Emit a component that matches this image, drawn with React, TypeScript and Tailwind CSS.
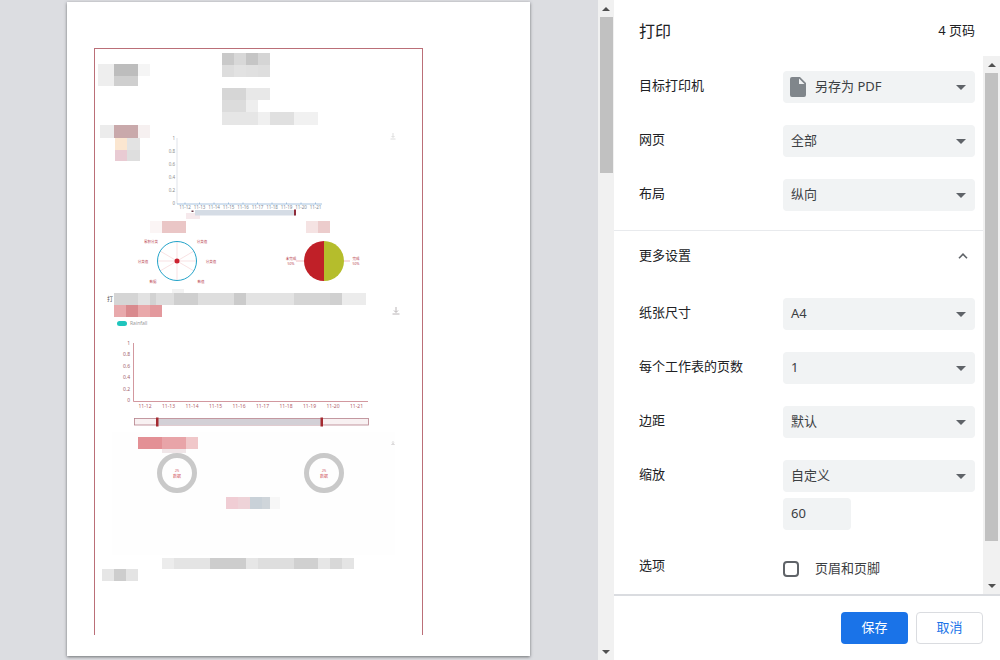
/**
 * Chrome print preview dialog
 * Left: page preview (redacted report). Right: print settings panel.
 */
type Cell = [string, number];

// pixelated redaction strip, colours and widths come from the data
function Strip({ cells, h = 12, className = "" }: { cells: Cell[]; h?: number; className?: string }) {
  return (
    <div className={"flex shrink-0 " + className} style={{ height: h }}>
      {cells.map(([color, w], i) => (
        <div key={i} style={{ width: w, backgroundColor: color }} />
      ))}
    </div>
  );
}

function Caret() {
  return (
    <svg width="10" height="5" viewBox="0 0 10 5" className="ml-auto mr-[9px] shrink-0">
      <path d="M0 0h10L5 5z" fill="#5f6368" />
    </svg>
  );
}

function Select({ label, value, icon }: { label: string; value: string; icon?: boolean }) {
  return (
    <div className="flex items-center">
      <div className="w-[144px] pb-0.5 text-[13px] text-[#202124]">{label}</div>
      <div className="flex h-8 w-[192px] items-center rounded bg-[#f1f3f4] pl-2 text-[13px] text-[#3c4043]">
        {icon && (
          <svg width="18" height="20" viewBox="4 2 16 20" className="mr-[6px] -ml-[2px]">
            <path d="M14 2H6a2 2 0 0 0-2 2v16a2 2 0 0 0 2 2h12a2 2 0 0 0 2-2V8l-6-6zm-1 7V3.5L18.5 9H13z" fill="#80868b" />
          </svg>
        )}
        {icon ? <span className="ml-[2px]">{value}</span> : value}
        <Caret />
      </div>
    </div>
  );
}

function ScrollArrow({ up }: { up?: boolean }) {
  return (
    <div className="flex h-[17px] shrink-0 items-center justify-center">
      <svg width="8" height="4" viewBox="0 0 8 4">
        <path d={up ? "M0 4h8L4 0z" : "M0 0h8L4 4z"} fill="#505050" />
      </svg>
    </div>
  );
}

function Scrollbar({ thumb, className }: { thumb: string; className: string }) {
  return (
    <div className={"flex shrink-0 flex-col bg-[#f1f1f1] " + className}>
      <ScrollArrow up />
      <div className={"mx-auto w-[13px] bg-[#c1c1c1] " + thumb} />
      <div className="flex-1" />
      <ScrollArrow />
    </div>
  );
}

function DownloadIcon({ className = "" }: { className?: string }) {
  return (
    <svg width="8" height="8" viewBox="0 0 8 8" className={className}>
      <path d="M4 0v5M2 3.5 4 5.5l2-2M0.5 7h7" fill="none" stroke="#b9b4b6" strokeWidth="1" />
    </svg>
  );
}

const days = ["11-12", "11-13", "11-14", "11-15", "11-16", "11-17", "11-18", "11-19", "11-20", "11-21"];

function SmallChart() {
  return (
    <svg width="257" height="90" viewBox="165 130 257 90" className="mt-[5px] block">
      <path d="M177 138v66" stroke="#dfe3ea" strokeWidth="1" />
      {["1", "0.8", "0.6", "0.4", "0.2", "0"].map((t, i) => (
        <text key={t} x="175" y={139.5 + i * 13.1} fontSize="4.5" textAnchor="end" fill="#8a8a8a">
          {t}
        </text>
      ))}
      <path d="M177 204h145" stroke="#8fb4d8" strokeWidth="0.8" />
      {days.map((d, i) => (
        <g key={d}>
          <path d={`M${185 + i * 14.5} 202.5v1.5`} stroke="#8fb4d8" strokeWidth="0.8" />
          <text x={185 + i * 14.5} y="209" fontSize="4.5" textAnchor="middle" fill="#7d8794">
            {d}
          </text>
        </g>
      ))}
      <rect x="186" y="213" width="14" height="6" fill="#f6e9ec" />
      <rect x="195" y="210" width="100" height="5.5" fill="#d5dce5" />
      <rect x="191.5" y="210.5" width="2" height="1.5" fill="#6b3a48" />
      <rect x="294" y="209.5" width="2" height="6" fill="#8e2c3a" />
      <path d="M393 133v4M391.5 136l1.5 1.5 1.5-1.5M390.5 139h5" fill="none" stroke="#cfcfcf" strokeWidth="0.7" />
    </svg>
  );
}

function RadarChart() {
  const labels: [string, number, number][] = [
    ["累积分类", 151, 242.5],
    ["分类值", 202, 242.5],
    ["分类值", 143, 262.5],
    ["分类值", 211, 262.5],
    ["数据", 153, 282.5],
    ["数值", 201, 282.5],
  ];
  return (
    <svg width="105" height="56" viewBox="125 233 105 56" className="block">
      <path d="M177 241v40M160 251l34 20M194 251l-34 20M157 261h40" stroke="#f3cfd0" strokeWidth="0.6" />
      <circle cx="177" cy="261" r="19.5" fill="none" stroke="#23a3c9" strokeWidth="1" />
      <circle cx="177" cy="261" r="2.5" fill="#cc2230" />
      {labels.map(([t, x, y]) => (
        <text key={x + t} x={x} y={y} fontSize="3.5" textAnchor="middle" fill="#b8404c">
          {t}
        </text>
      ))}
    </svg>
  );
}

function PieChart() {
  return (
    <svg width="105" height="56" viewBox="270 233 105 56" className="block">
      <path d="M324 241a20 20 0 0 1 0 40z" fill="#b5bd2c" />
      <path d="M324 241a20 20 0 0 0 0 40z" fill="#c02028" />
      <path d="M296 261h8M344 261h6" stroke="#e88f96" strokeWidth="0.6" />
      <text x="291" y="260" fontSize="3.5" textAnchor="middle" fill="#b8404c">未完成</text>
      <text x="291" y="264.5" fontSize="3.5" textAnchor="middle" fill="#b8404c">50%</text>
      <text x="356" y="260" fontSize="3.5" textAnchor="middle" fill="#b8404c">完成</text>
      <text x="356" y="264.5" fontSize="3.5" textAnchor="middle" fill="#b8404c">50%</text>
    </svg>
  );
}

function RainfallChart() {
  return (
    <svg width="327" height="102" viewBox="95 330 327 102" className="block">
      <path d="M133.5 343v58.5H368" fill="none" stroke="#c77d86" strokeWidth="0.8" />
      {["1", "0.8", "0.6", "0.4", "0.2", "0"].map((t, i) => (
        <text key={t} x="130" y={345 + i * 11.4} fontSize="5" textAnchor="end" fill="#a0606a">
          {t}
        </text>
      ))}
      {days.map((d, i) => (
        <text key={d} x={145 + i * 23.5} y="408" fontSize="5" textAnchor="middle" fill="#b0606a">
          {d}
        </text>
      ))}
      <rect x="134.5" y="418.5" width="234" height="6.5" fill="#f8f1f2" stroke="#b5808a" strokeWidth="0.8" />
      <rect x="157" y="419" width="165" height="6" fill="#d3d0d6" />
      <rect x="156" y="417.5" width="2.5" height="9" fill="#a52a30" />
      <rect x="320.5" y="417.5" width="2.5" height="9" fill="#a52a30" />
    </svg>
  );
}

function Ring({ top, bottom }: { top: string; bottom: string }) {
  return (
    <svg width="40" height="40" viewBox="0 0 40 40" className="block shrink-0">
      <circle cx="20" cy="20" r="17.5" fill="none" stroke="#c9c9c9" strokeWidth="5" />
      <text x="20" y="18.5" fontSize="4" textAnchor="middle" fill="#d0545e">{top}</text>
      <text x="20" y="25" fontSize="4" textAnchor="middle" fill="#d0545e">{bottom}</text>
    </svg>
  );
}

function PagePreview() {
  return (
    <div className="h-[654px] w-[463px] bg-white px-[27px] pt-[46px] shadow-[0_1px_3px_rgba(60,64,67,0.7)]">
      <div className="h-[587px] w-[329px] border-x border-t border-[#bb6f78]">
        {/* top block: title strips and first chart */}
        <div className="flex h-[171px]">
          <div className="w-[70px] shrink-0">
            <Strip className="ml-[3px] mt-[15px]" cells={[["#eeeeee", 16], ["#bdbdbd", 24], ["#f5f5f5", 12]]} />
            <Strip h={10} className="ml-[3px]" cells={[["#eeeeee", 16], ["#cfcfcf", 24]]} />
            <Strip h={13} className="ml-[5px] mt-[39px]" cells={[["#ececec", 14], ["#c9a9ab", 24], ["#f6f0f0", 12]]} />
            <Strip className="ml-[20px]" cells={[["#fbe6d0", 12], ["#e3e3e3", 13]]} />
            <Strip h={11} className="ml-[20px]" cells={[["#e9cbd3", 12], ["#dedede", 13]]} />
          </div>
          <div>
            <Strip className="ml-[57px] mt-[4px]" cells={[["#c9c9c9", 12], ["#d8d8d8", 12], ["#c5c5c5", 12], ["#d5d5d5", 12]]} />
            <Strip className="ml-[57px]" cells={[["#dddddd", 12], ["#e2e2e2", 12], ["#e0e0e0", 12], ["#dedede", 12]]} />
            <Strip className="ml-[57px] mt-[11px]" cells={[["#d6d6d6", 24], ["#e8e8e8", 24]]} />
            <Strip className="ml-[57px]" cells={[["#dcdcdc", 24], ["#eeeeee", 12]]} />
            <Strip h={13} className="ml-[57px]" cells={[["#e6e6e6", 36], ["#f0f0f0", 12], ["#e0e0e0", 24], ["#f1f1f1", 24]]} />
            <SmallChart />
          </div>
        </div>

        {/* radar + pie */}
        <div className="ml-[30px] mt-px flex">
          <div>
            <Strip className="ml-[25px]" cells={[["#fbf5f5", 12], ["#eac6c6", 24]]} />
            <RadarChart />
          </div>
          <div className="ml-[40px]">
            <Strip className="ml-[36px]" cells={[["#f5e3e3", 12], ["#eccccc", 12]]} />
            <PieChart />
          </div>
        </div>
        <Strip h={4} className="ml-[77px]" cells={[["#f2f2f2", 12]]} />

        {/* second section */}
        <div className="flex items-center pl-[12px]">
          <div className="w-[7px] text-[6px] leading-none text-[#555555]">打</div>
          <Strip
            cells={[
              ["#d5d5d5", 24], ["#e2e2e2", 12], ["#d2d2d2", 6], ["#dedede", 18], ["#cfcfcf", 24], ["#dedede", 36],
              ["#cbcbcb", 12], ["#e3e3e3", 48], ["#d5d5d5", 36], ["#d0d0d0", 12], ["#ececec", 24],
            ]}
          />
        </div>
        <div className="flex items-center pl-[19px]">
          <Strip cells={[["#e8a9ac", 12], ["#d98a8e", 12], ["#e9a8aa", 12], ["#e3999d", 12]]} />
          <DownloadIcon className="ml-[230px]" />
        </div>
        <div className="ml-[22px] mt-[2px] flex h-[8px] items-center gap-[3px]">
          <div className="h-[5px] w-[10px] rounded-sm bg-[#1fc5bd]" />
          <span className="text-[5px] leading-none text-[#9a9a9a]">Rainfall</span>
        </div>
        <div className="mt-[3px]">
          <RainfallChart />
        </div>

        {/* third section */}
        <div className="ml-[17px] h-[123px] w-[283px] bg-[#fefefe] pt-[5px]">
          <div className="flex items-center pl-[26px]">
            <Strip cells={[["#e39095", 24], ["#e8a4a8", 24], ["#f0c7c9", 12]]} />
            <DownloadIcon className="ml-[193px]" />
          </div>
          <Strip h={4} className="ml-[50px]" cells={[["#f0e6e8", 24]]} />
          <div className="ml-[45px] flex gap-[107px]">
            <Ring top="25" bottom="数据" />
            <Ring top="25" bottom="数据" />
          </div>
          <Strip className="ml-[114px] mt-[4px]" cells={[["#f0cdd4", 12], ["#eed3d8", 12], ["#c9d1d8", 12], ["#cfd5da", 8], ["#f7f7f7", 10]]} />
        </div>

        <Strip
          h={11}
          className="ml-[67px] mt-[3px]"
          cells={[
            ["#ececec", 12], ["#e4e4e4", 36], ["#cdcdcd", 36], ["#e6e6e6", 12], ["#dedede", 36], ["#d0d0d0", 24],
            ["#e6e6e6", 12], ["#d8d8d8", 12], ["#e4e4e4", 12],
          ]}
        />
        <Strip className="ml-[7px]" cells={[["#e6e6e6", 12], ["#cdcdcd", 12], ["#e4e4e4", 12]]} />
      </div>
    </div>
  );
}

export default function App() {
  return (
    <div className="flex h-[660px] w-[1000px] overflow-hidden bg-[#dcdde1] font-['Noto_Sans','Noto_Sans_CJK_SC',sans-serif]">
      {/* Preview */}
      <div className="w-[598px] shrink-0 pl-[67px] pt-[2px]">
        <PagePreview />
      </div>
      <Scrollbar className="h-[660px] w-4" thumb="h-[156px]" />

      {/* Settings panel */}
      <div className="flex h-[660px] flex-1 flex-col bg-white">
        <div className="flex h-[56px] shrink-0 items-center justify-between pl-[25px] pr-[25px] pt-[6px] text-[#202124]">
          <span className="text-[16px]">打印</span>
          <span className="text-[13px]">4 页码</span>
        </div>

        <div className="flex h-[538px] shrink-0">
          <div className="flex-1 pt-[15px]">
            <div className="flex flex-col gap-[22px] pl-[25px]">
              <Select label="目标打印机" value="另存为 PDF" icon />
              <Select label="网页" value="全部" />
              <Select label="布局" value="纵向" />
            </div>

            <div className="mt-[19px] flex h-[51px] items-center justify-between border-t border-[#e8eaed] pl-[25px] pr-[15px]">
              <span className="text-[13px] text-[#202124]">更多设置</span>
              <svg width="10" height="6" viewBox="0 0 10 6">
                <path d="M1 5.2 5 1.2l4 4" fill="none" stroke="#5f6368" strokeWidth="1.6" />
              </svg>
            </div>

            <div className="mt-[17px] flex flex-col gap-[22px] pl-[25px]">
              <Select label="纸张尺寸" value="A4" />
              <Select label="每个工作表的页数" value="1" />
              <Select label="边距" value="默认" />
              <Select label="缩放" value="自定义" />
            </div>
            <div className="ml-[169px] mt-[6px] flex h-8 w-[68px] items-center rounded bg-[#f1f3f4] pl-2 text-[13px] text-[#3c4043]">
              60
            </div>
            <div className="mt-[22px] flex h-8 items-center pl-[25px]">
              <div className="w-[144px] pb-1 text-[13px] text-[#202124]">选项</div>
              <div className="mt-[2px] h-4 w-4 rounded-sm border-2 border-[#5f6368]" />
              <span className="ml-4 mt-[2px] text-[13px] text-[#3c4043]">页眉和页脚</span>
            </div>
          </div>
          <Scrollbar className="w-[17px]" thumb="h-[468px]" />
        </div>

        <div className="flex flex-1 justify-end gap-2 border-t-2 border-[#dadce0] pr-[17px] pt-4">
          <button className="h-8 w-[67px] rounded bg-[#1a73e8] text-[13px] text-white">保存</button>
          <button className="h-8 w-[67px] rounded border border-[#dadce0] bg-white text-[13px] text-[#1a73e8]">取消</button>
        </div>
      </div>
    </div>
  );
}
